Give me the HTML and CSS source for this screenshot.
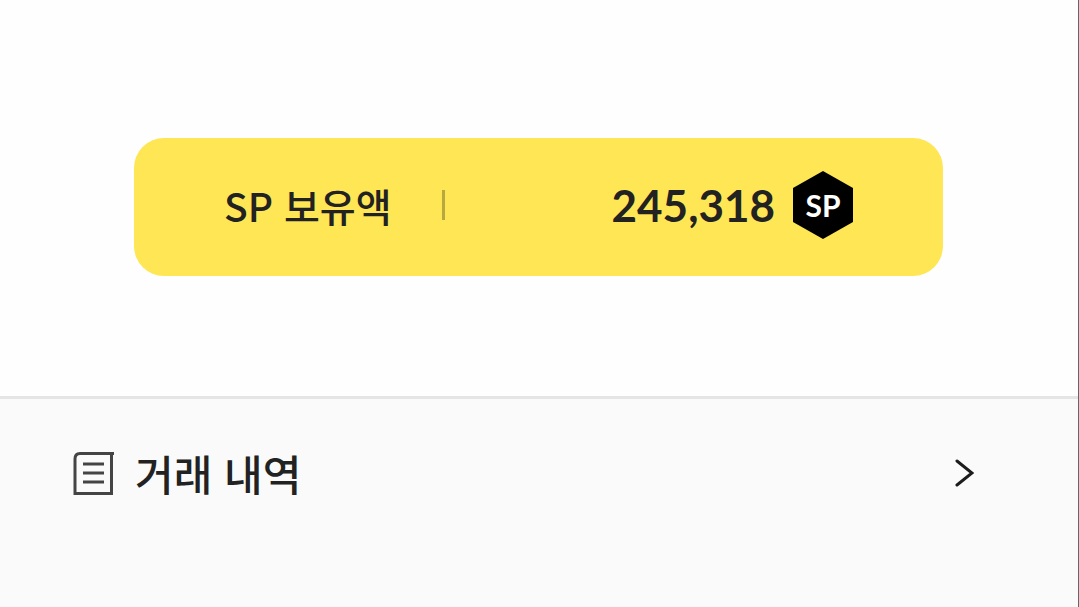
FILE: index.html
```
<!DOCTYPE html>
<html lang="ko">

<head>
    <meta charset="UTF-8">
    <meta name="viewport" content="width=device-width, initial-scale=1.0">
    <title>SP 보유액</title>
    <link rel="stylesheet" href="styles.css">
</head>

<body>
    <main class="wallet">
        <section class="balance">
            <div class="balance-card">
                <span class="balance-label">SP 보유액</span>
                <span class="balance-divider"></span>
                <strong class="balance-amount">245,318</strong>
                <span class="sp-badge">SP</span>
            </div>
        </section>

        <section class="history">
            <a class="history-link" href="#">
                <svg class="history-icon" viewBox="0 0 42 44" fill="none" stroke="#444" stroke-width="3">
                    <path d="M41 2.5H7Q2 2.5 2 8V42.5H38.5V2.5" />
                    <path d="M10 13H31M10 22H31M10 31H31" />
                </svg>
                <span class="history-title">거래 내역</span>
                <svg class="history-arrow" viewBox="0 0 20 30" fill="none" stroke="#1c1c1c" stroke-width="3" stroke-linecap="round">
                    <path d="M3 3L18 15L3 27" />
                </svg>
            </a>
        </section>
    </main>
</body>

</html>
```
FILE: styles.css
```
* {
    box-sizing: border-box;
}

body {
    margin: 0;
    font-family: "Noto Sans CJK KR", sans-serif;
    color: #222;
    background-color: #fefefe;
}

.wallet {
    display: flex;
    flex-direction: column;
    min-height: 100vh;
    border-right: 1px solid #666;
}

.balance {
    padding: 138px 135px 120px 134px;
}

.balance-card {
    display: flex;
    align-items: center;
    padding: 31px 90px 35px;
    border-radius: 30px;
    background-color: #ffe654;
}

.balance-label {
    font-size: 39px;
    font-weight: 500;
    line-height: 72px;
}

.balance-divider {
    width: 3px;
    height: 30px;
    margin-left: 50px;
    background-color: #b8a840;
}

.balance-amount {
    margin-left: auto;
    font-family: Lato, sans-serif;
    font-size: 44px;
    font-weight: 700;
    line-height: 72px;
}

.sp-badge {
    display: flex;
    align-items: center;
    justify-content: center;
    width: 60px;
    height: 68px;
    margin-left: 18px;
    font-family: Lato, sans-serif;
    font-size: 30px;
    font-weight: 700;
    line-height: 30px;
    color: #fff;
    background-color: #000;
    clip-path: polygon(50% 0, 100% 25%, 100% 75%, 50% 100%, 0 75%, 0 25%);
}

.history {
    flex: 1;
    border-top: 3px solid #e5e5e5;
    background-color: #fafafa;
}

.history-link {
    display: flex;
    align-items: center;
    padding: 40px 104px 40px 73px;
    color: inherit;
    text-decoration: none;
}

.history-icon {
    width: 42px;
    height: 44px;
}

.history-title {
    margin-left: 20px;
    font-size: 42px;
    font-weight: 500;
    line-height: 68px;
}

.history-arrow {
    width: 20px;
    height: 30px;
    margin-left: auto;
}
```
